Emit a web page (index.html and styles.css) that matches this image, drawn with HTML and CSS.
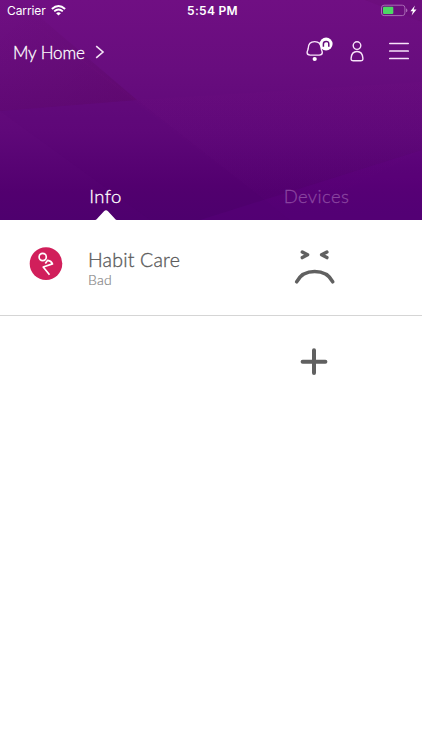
FILE: index.html
```
<!DOCTYPE html>
<html lang="en">

<head>
    <meta charset="UTF-8">
    <meta name="viewport" content="width=device-width, initial-scale=1.0">
    <title>My Home</title>
    <link rel="stylesheet" href="styles.css">
</head>

<body>

    <header class="hero">
        <svg class="hero-bg" viewBox="0 0 422 220" preserveAspectRatio="none" aria-hidden="true">
            <defs>
                <linearGradient id="shade" x1="0" y1="0" x2="1" y2="1">
                    <stop offset="0" stop-color="#4a0040" stop-opacity="0" />
                    <stop offset="1" stop-color="#4a0040" stop-opacity=".2" />
                </linearGradient>
                <linearGradient id="light" x1="0" y1="0" x2="0" y2="1">
                    <stop offset="0" stop-color="#a01890" stop-opacity=".04" />
                    <stop offset="1" stop-color="#a01890" stop-opacity="0" />
                </linearGradient>
            </defs>
            <path d="M0 0H20L137 100L0 111Z" fill="url(#shade)" />
            <path d="M20 14L137 100L422 82V150L290 220Z" fill="url(#light)" />
            <path d="M137 100L290 220H150L0 111Z" fill="#3d0068" opacity=".03" />
            <path d="M365 0H422V22Z" fill="#4a0030" opacity=".06" />
            <path d="M422 150L200 220H422Z" fill="#70009c" opacity=".14" />
        </svg>

        <div class="status-bar">
            <div class="status-left">
                <span class="carrier">Carrier</span>
                <svg class="wifi" width="15" height="11" viewBox="0 0 15 11" fill="none" stroke="#fff">
                    <path d="M.9 4Q7.5-1.9 14.1 4" stroke-width="2" />
                    <path d="M3.2 6.4Q7.5 2.7 11.8 6.4" stroke-width="1.8" />
                    <path d="M7.5 10.6L5.1 8.2Q7.5 6.3 9.9 8.2Z" fill="#fff" stroke="none" />
                </svg>
            </div>
            <span class="time">5:54 PM</span>
            <div class="status-right">
                <svg width="37" height="13" viewBox="0 0 37 13">
                    <rect x=".5" y="1.2" width="23.4" height="10.4" rx="2.6" fill="none" stroke="#a869b4" />
                    <rect x="2" y="2.7" width="10.3" height="7.4" rx="1" fill="#4cd964" />
                    <path d="M25 4.6Q26.4 4.9 26.4 6.4T25 8.2Z" fill="#a869b4" />
                    <path d="M33.9 1.4L29.4 7.2H31.9L30.6 11.6L35.5 5.6H32.7Z" fill="#fff" />
                </svg>
            </div>
        </div>

        <nav class="top-nav">
            <a class="home-link" href="#">
                <span>My Home</span>
                <svg class="chevron" width="10" height="14" viewBox="0 0 10 14" fill="none" stroke="#f3e4f5" stroke-width="1.6">
                    <path d="M1.2 1.2L8 7L1.2 12.8" />
                </svg>
            </a>
            <div class="nav-icons">
                <svg class="bell" width="27" height="26" viewBox="0 0 27 26">
                    <path d="M8.7 4.6C4.3 4.6 2.3 7.6 2.2 11.4C2.1 13.2 1.1 13.8 1.1 15.6C1.1 17.5 2.3 18.1 4.2 18.1H13.2C15.1 18.1 16.3 17.5 16.3 15.6C16.3 13.8 15.3 13.2 15.2 11.4C15.1 7.6 13.1 4.6 8.7 4.6Z" fill="none" stroke="#f8e4fa" stroke-width="1.4" />
                    <circle cx="8.7" cy="22" r="2.1" fill="#fff" />
                    <circle cx="20.1" cy="7" r="6.5" fill="#fff" />
                    <path d="M17.4 9.8V6.9Q17.4 4.4 20.1 4.4T22.8 6.9V9.8" fill="none" stroke="#650d7b" stroke-width="1.5" />
                </svg>
                <svg class="person" width="14" height="21" viewBox="0 0 14 21" fill="none" stroke="#f8e4fa" stroke-width="1.4">
                    <circle cx="7" cy="4.6" r="3.8" />
                    <path d="M7 10.5C3.6 10.5 1.4 13.2 1.1 17.2C1 19.1 1.7 19.8 3.4 19.8H10.6C12.3 19.8 13 19.1 12.9 17.2C12.6 13.2 10.4 10.5 7 10.5Z" />
                </svg>
                <svg class="menu" width="20" height="18" viewBox="0 0 20 18" stroke="#f8e4fa" stroke-width="1.5" stroke-linecap="round">
                    <path d="M.7 1.5H19.3M.7 9.1H19.3M.7 16.6H19.3" />
                </svg>
            </div>
        </nav>

        <div class="tabs">
            <a class="tab active" href="#"><span class="tab-info">Info</span>
                <svg class="pointer" width="22" height="10" viewBox="0 0 22 10">
                    <path d="M0 10C1.6 10 2.3 8.4 3.2 7.5L9 1.3Q11-.8 13 1.3L18.8 7.5C19.7 8.4 20.4 10 22 10Z" fill="#fff" />
                </svg>
            </a>
            <a class="tab" href="#"><span class="tab-devices">Devices</span></a>
        </div>
    </header>

    <main>
        <div class="row">
            <svg class="habit-icon" width="34" height="34" viewBox="0 0 34 34">
                <circle cx="17" cy="16.6" r="16.3" fill="#d11f5b" />
                <g fill="none" stroke="#fff" stroke-width="1.7" stroke-linejoin="round">
                    <circle cx="13.7" cy="10" r="3.6" />
                    <path d="M16.3 16.4L18.7 13.3Q22.4 13.6 23.5 16.9L14.2 20L20.5 27.8" />
                </g>
            </svg>
            <div class="row-text">
                <h2>Habit Care</h2>
                <p>Bad</p>
            </div>
            <svg class="face" width="42" height="38" viewBox="0 0 42 38" fill="none" stroke="#606060" stroke-linecap="round" stroke-linejoin="round">
                <path d="M8.3 5L13.6 7.8L8.3 10.6M32.9 5L27.6 7.8L32.9 10.6" stroke-width="3.4" />
                <path d="M2.6 34.8C10 21.2 31.4 21.2 38.8 34.8" stroke-width="3.5" />
            </svg>
        </div>
        <div class="add-row">
            <svg width="28" height="28" viewBox="0 0 28 28" stroke="#606060" stroke-width="4" stroke-linecap="round">
                <path d="M14 2.3V25.1M2.6 13.7H25.4" />
            </svg>
        </div>
    </main>

</body>

</html>
```
FILE: styles.css
```
* {
    margin: 0;
    padding: 0;
    box-sizing: border-box;
}

body {
    font-family: Lato, sans-serif;
    background-color: #fff;
    color: #5c5c5c;
    height: 750px;
    overflow: hidden;
}

svg {
    display: block;
    flex-shrink: 0;
}

a {
    color: inherit;
    text-decoration: none;
}

/* Header */
.hero {
    position: relative;
    height: 220px;
    color: #fff;
    background: linear-gradient(#700f83 0%, #680d7e 32%, #5f0879 60%, #52006f 87%, #4e006e 100%);
    display: flex;
    flex-direction: column;
}

.hero-bg {
    position: absolute;
    inset: 0;
    width: 100%;
    height: 100%;
}

.status-bar,
.top-nav,
.tabs {
    position: relative;
}

.status-bar {
    height: 21px;
    padding: 0 4px 0 7px;
    display: grid;
    grid-template-columns: 1fr auto 1fr;
    align-items: center;
    font-family: Inter, sans-serif;
    font-size: 12px;
}

.status-left {
    display: flex;
    align-items: center;
    gap: 5px;
}

.carrier {
    letter-spacing: -0.1px;
}

.time {
    font-weight: 600;
    letter-spacing: 0.3px;
}

.status-right {
    display: flex;
    justify-content: flex-end;
}

.top-nav {
    height: 60px;
    padding: 0 13px;
    display: flex;
    justify-content: space-between;
    align-items: center;
}

.home-link {
    display: flex;
    align-items: center;
    gap: 10px;
    font-size: 17px;
    font-weight: 300;
    line-height: 24px;
    letter-spacing: -0.1px;
    padding-top: 4px;
    -webkit-text-stroke: 0.3px;
}

.chevron {
    margin-bottom: 3px;
}

.nav-icons {
    display: flex;
    align-items: center;
}

.bell {
    margin-bottom: 2px;
}

.person {
    margin-left: 17px;
}

.menu {
    margin-left: 25px;
}

.tabs {
    margin-top: auto;
    height: 48px;
    display: grid;
    grid-template-columns: 1fr 1fr;
}

.tab {
    position: relative;
    display: flex;
    justify-content: center;
    padding-top: 12px;
    font-size: 18.5px;
    font-weight: 300;
    letter-spacing: 0.4px;
    line-height: 24px;
    color: #8a45a0;
    -webkit-text-stroke: 0.3px;
}

.tab.active {
    color: #fff;
}

.pointer {
    position: absolute;
    bottom: 0;
    left: calc(50% - 11px);
}

/* List */
.row {
    height: 96px;
    padding: 27px 86px 0 29px;
    border-bottom: 1px solid #d5d5d5;
    display: flex;
    align-items: flex-start;
}

.row-text {
    flex: 1;
    margin-left: 25px;
}

.row-text h2 {
    font-size: 19.5px;
    font-weight: 300;
    line-height: 26px;
    letter-spacing: 0.2px;
    -webkit-text-stroke: 0.35px;
}

.row-text p {
    font-size: 14px;
    font-weight: 300;
    line-height: 14px;
    letter-spacing: 0.3px;
    color: #888;
    -webkit-text-stroke: 0.2px;
}

.add-row {
    display: flex;
    justify-content: flex-end;
    padding: 32px 94px 0 0;
}
```
